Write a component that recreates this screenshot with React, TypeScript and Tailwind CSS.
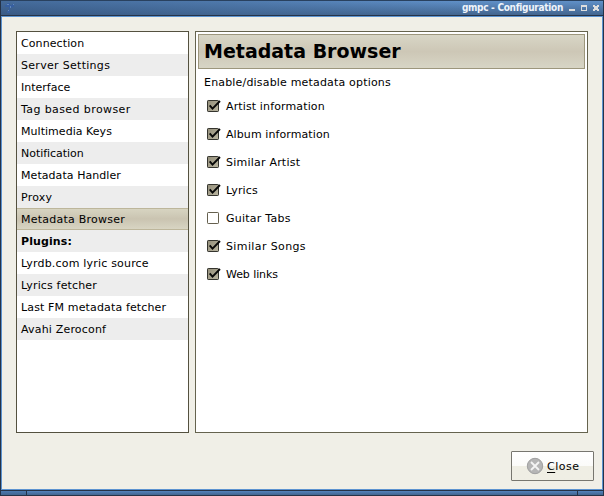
const sections: { label: string; spacing: string }[] = [
  { label: "Connection", spacing: "tracking-[0.1px]" },
  { label: "Server Settings", spacing: "tracking-[0.3px]" },
  { label: "Interface", spacing: "tracking-[0px]" },
  { label: "Tag based browser", spacing: "tracking-[0.4px]" },
  { label: "Multimedia Keys", spacing: "tracking-[0.04px]" },
  { label: "Notification", spacing: "tracking-[-0.03px]" },
  { label: "Metadata Handler", spacing: "tracking-[0.06px]" },
  { label: "Proxy", spacing: "tracking-[0.25px]" },
  { label: "Metadata Browser", spacing: "tracking-[0.24px]" },
  { label: "Plugins:", spacing: "font-bold tracking-[0.1px]" },
  { label: "Lyrdb.com lyric source", spacing: "tracking-[0.19px]" },
  { label: "Lyrics fetcher", spacing: "tracking-[0.16px]" },
  { label: "Last FM metadata fetcher", spacing: "tracking-[0.14px]" },
  { label: "Avahi Zeroconf", spacing: "tracking-[0.18px]" },
];

const options = [
  { label: "Artist information", checked: true, spacing: "tracking-[0.13px]" },
  { label: "Album information", checked: true, spacing: "tracking-[0.09px]" },
  { label: "Similar Artist", checked: true, spacing: "tracking-[0.22px]" },
  { label: "Lyrics", checked: true, spacing: "tracking-[0.15px]" },
  { label: "Guitar Tabs", checked: false, spacing: "tracking-[0.24px]" },
  { label: "Similar Songs", checked: true, spacing: "tracking-[0.38px]" },
  { label: "Web links", checked: true, spacing: "tracking-[-0.08px]" },
];

function CheckMark({ checked }: { checked: boolean }) {
  return (
    <svg width="15" height="14" viewBox="0 0 15 14" className="block shrink-0">
      <defs>
        <linearGradient id="box" x1="0" y1="0" x2="1" y2="1">
          <stop offset="0" stopColor="#928d79" />
          <stop offset="1" stopColor="#bbb6a1" />
        </linearGradient>
      </defs>
      <rect x="0.5" y="1.5" width="11" height="11" rx="0.7" fill={checked ? "url(#box)" : "#fff"} stroke={checked ? "#34342e" : "#65604e"} />
      {checked && <path d="M2.7 6.4 5.5 9.6 13 2" fill="none" stroke="#080808" strokeWidth="1.9" />}
    </svg>
  );
}

function TitleBar() {
  return (
    <header className="flex h-4 shrink-0 items-center border-t border-b border-x border-t-[#29415f] border-x-[#253348] border-b-[#253348] bg-linear-to-b from-[#6090c8] to-[#42658f] pl-1 pr-[3px]">
      <div className="-mx-1 flex h-full grow items-center bg-linear-to-r from-[#32527d]/60 via-[#3f6492]/50 to-transparent pl-1">
        <svg width="10" height="12" viewBox="0 0 10 12" shapeRendering="crispEdges">
          <path d="M0 3h2v2H0zM2 1h3v2h2V2h2v3H7v1H5v5H2V9h2V5H2z" fill="#365fa0" />
          <path d="M2 2h2v1H2zM5 4h1v2H5zM8 2h1v1H8zM3 8h1v1H3z" fill="#6287bc" />
        </svg>
      </div>
      <h1 className="mr-[5px] ml-1 whitespace-nowrap font-['DejaVu_Sans_Condensed','DejaVu_Sans',sans-serif] text-[10px] leading-[14px] font-bold tracking-[-0.3px] text-[#eef4fb]">gmpc - Configuration</h1>
      <svg width="32" height="14" viewBox="0 0 32 14" fill="#dedede" shapeRendering="crispEdges">
        <path d="M1 8h6v2H1z" />
        <path fillRule="evenodd" d="M13 4h6v6h-6zM14 6v3h4V6z" />
        <path d="M25 4h2v1h2V4h2v2h-1v2h1v2h-2V9h-2v1h-2V8h1V6h-1z" />
      </svg>
    </header>
  );
}

export default function App() {
  return (
    <main className="flex h-[496px] w-[604px] flex-col overflow-hidden bg-[#253348] font-['DejaVu_Sans',sans-serif] text-[11px] text-black">
      <TitleBar />
      <div className="mx-px flex h-[474px] shrink-0 flex-col border border-[#5c93d0] bg-[#f0efe7]">
        <div className="mt-[14px] ml-[14px] flex h-[402px] gap-[6px]">
          <nav className="w-[173px] border border-[#54513f] bg-white">
            {sections.map(({ label, spacing }) => (
              <div
                key={label}
                className={`flex h-[22px] items-center pl-1 leading-[14px] whitespace-nowrap ${
                  label === "Metadata Browser"
                    ? "border-y border-[#bdb69b] bg-linear-to-b from-[#d7d4c1] via-[#cac4b1] to-[#d8d5c3] pt-px"
                    : "pt-[2px] even:bg-[#ededed] " + (label === "Plugins:" ? "bg-[#ededed]" : "")
                } ${spacing}`}
              >
                {label}
              </div>
            ))}
          </nav>
          <section className="w-[393px] border border-[#65634e] bg-white p-[2px]">
            <h2 className="flex h-[35px] items-center border border-[#9c967c] bg-linear-to-b from-[#d8d6c6] via-[#cdc7b6] to-[#d7d5c5] pb-px pl-[5px] text-[19px] leading-6 font-bold whitespace-nowrap">
              Metadata Browser
            </h2>
            <p className="mt-[7px] ml-[6px] leading-[14px] tracking-[0.18px]">Enable/disable metadata options</p>
            <div className="mt-[2px] ml-[9px]">
              {options.map(({ label, checked, spacing }) => (
                <div key={label} className="flex h-7 items-center gap-1 leading-[14px]">
                  <CheckMark checked={checked} />
                  <span className={`pt-[2px] ${spacing}`}>{label}</span>
                </div>
              ))}
            </div>
          </section>
        </div>
        <button className="mt-[18px] mr-[8px] ml-auto flex h-[30px] w-[83px] items-center rounded-[1px] border border-[#77766f] bg-linear-to-b from-white from-0% via-[#fbfbf9] via-50% to-[#efeee4] to-50% pl-[14px]">
          <svg width="18" height="18" viewBox="0 0 18 18">
            <circle cx="9" cy="9" r="7.7" fill="#b5b5b5" stroke="#a0a0a0" />
            <path d="m5 5 8 8m0-8-8 8" stroke="#f4f4f4" strokeWidth="1.8" />
          </svg>
          <span className="ml-[3px] pt-px leading-[14px] tracking-[0.5px]"><span className="underline underline-offset-2">C</span>lose</span>
        </button>
      </div>
      <footer className="mx-px mt-px flex h-1 shrink-0 gap-px">
        <div className="w-[25px] bg-linear-to-b from-[#4b79b0] to-[#42658f]" />
        <div className="grow bg-linear-to-b from-[#5383bd] to-[#42658f]" />
        <div className="w-[25px] bg-linear-to-b from-[#5383bd] to-[#42658f]" />
      </footer>
    </main>
  );
}
